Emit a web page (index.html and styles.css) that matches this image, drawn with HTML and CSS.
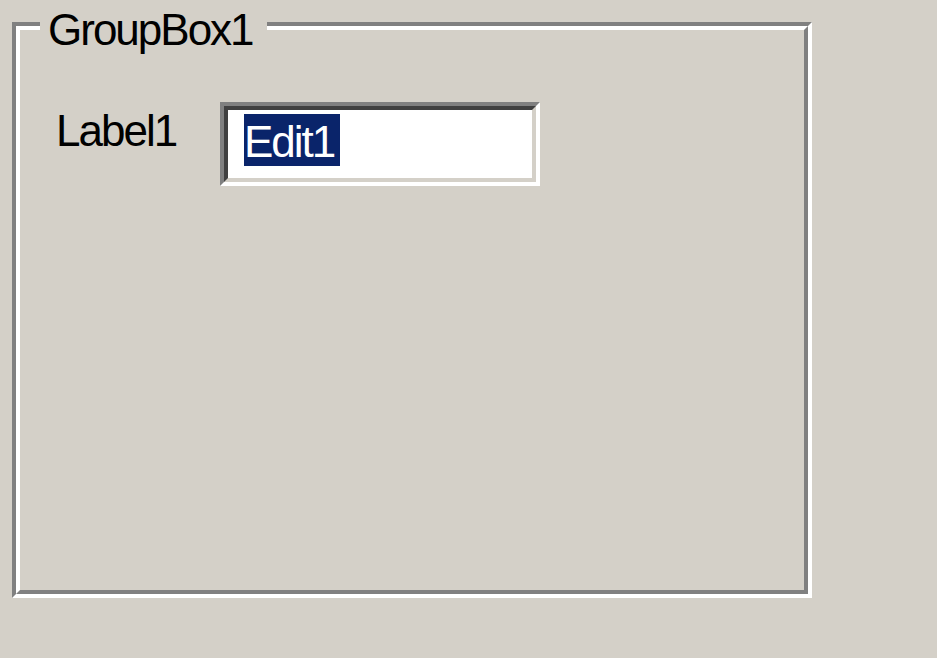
FILE: index.html
```html
<!DOCTYPE html>
<html>
<head>
<meta charset="utf-8">
<link rel="stylesheet" href="styles.css">
</head>
<body>
<div class="group">
  <div class="group-inner">
    <div class="row">
      <span class="label">Label1</span>
      <div class="edit">
        <div class="edit-inner"><span class="sel">Edit1</span></div>
      </div>
    </div>
  </div>
  <span class="legend">GroupBox1</span>
</div>
</body>
</html>
```
FILE: styles.css
```css
html, body {
  margin: 0;
  padding: 0;
  background: #d4d0c8;
  width: 937px;
  height: 658px;
  overflow: hidden;
}
body {
  font-family: "Liberation Sans", Arial, sans-serif;
  font-size: 44px;
  letter-spacing: -2px;
  color: #000;
  padding-top: 22px;
  padding-left: 12px;
  box-sizing: border-box;
}
.group {
  position: relative;
  width: 800px;
  height: 576px;
  box-sizing: border-box;
  border: 4px solid;
  border-color: #808080 #ffffff #ffffff #808080;
}
.group-inner {
  height: 100%;
  box-sizing: border-box;
  border: 4px solid;
  border-color: #ffffff #808080 #808080 #ffffff;
}
.legend {
  position: absolute;
  left: 24px;
  top: -18px;
  padding: 0 14px 0 8px;
  line-height: 44px;
  background: #d4d0c8;
}
.row {
  display: flex;
  align-items: flex-start;
  padding: 72px 0 0 36px;
}
.label {
  width: 164px;
  margin-top: 7px;
  line-height: 44px;
}
.edit {
  width: 320px;
  height: 84px;
  box-sizing: border-box;
  border: 4px solid;
  border-color: #808080 #ffffff #ffffff #808080;
}
.edit-inner {
  height: 100%;
  box-sizing: border-box;
  border: 4px solid;
  border-color: #404040 #d4d0c8 #d4d0c8 #404040;
  background: #fff;
  padding: 4px 0 0 16px;
}
.sel {
  display: inline-block;
  vertical-align: top;
  width: 96px;
  height: 52px;
  line-height: 56px;
  overflow: hidden;
  background: #0a246a;
  color: #fff;
}
```
